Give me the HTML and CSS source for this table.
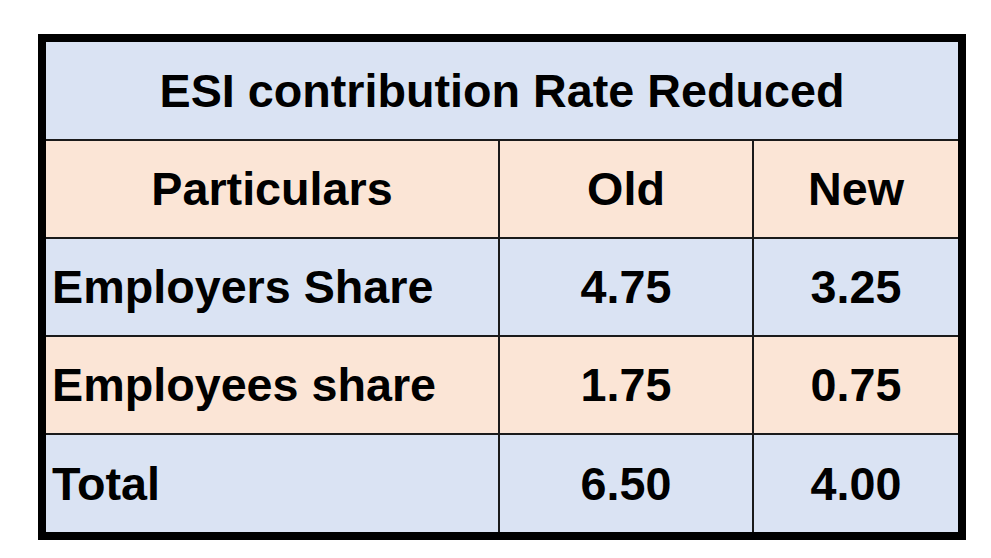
FILE: index.html
```html
<!DOCTYPE html>
<html>
<head>
<meta charset="utf-8">
<link rel="stylesheet" href="styles.css">
</head>
<body>
<div class="sheet">
  <div class="grid">
    <div class="cell blue title">ESI contribution Rate Reduced</div>
    <div class="cell peach center">Particulars</div>
    <div class="cell peach center">Old</div>
    <div class="cell peach center">New</div>
    <div class="cell blue left">Employers Share</div>
    <div class="cell blue center">4.75</div>
    <div class="cell blue center">3.25</div>
    <div class="cell peach left">Employees share</div>
    <div class="cell peach center">1.75</div>
    <div class="cell peach center">0.75</div>
    <div class="cell blue left">Total</div>
    <div class="cell blue center">6.50</div>
    <div class="cell blue center">4.00</div>
  </div>
</div>
</body>
</html>
```
FILE: styles.css
```css
html, body {
  margin: 0;
  padding: 0;
  background: #ffffff;
}
body {
  width: 991px;
  height: 558px;
  overflow: hidden;
}
.sheet {
  padding: 34px 0 0 38px;
}
.grid {
  display: grid;
  grid-template-columns: 452px 252px 204px;
  grid-template-rows: 97px 96px 96px 96px 97px;
  gap: 2px;
  width: 912px;
  background: #1a1a1a;
  border: 8px solid #000;
  font-family: "Liberation Sans", Arial, sans-serif;
  font-weight: bold;
  font-size: 46.7px;
  color: #000;
}
.cell {
  display: flex;
  align-items: center;
}
.blue {
  background: #dae3f3;
}
.peach {
  background: #fbe5d6;
}
.title {
  grid-column: 1 / 4;
  justify-content: center;
}
.center {
  justify-content: center;
}
.left {
  padding-left: 6px;
}
```
